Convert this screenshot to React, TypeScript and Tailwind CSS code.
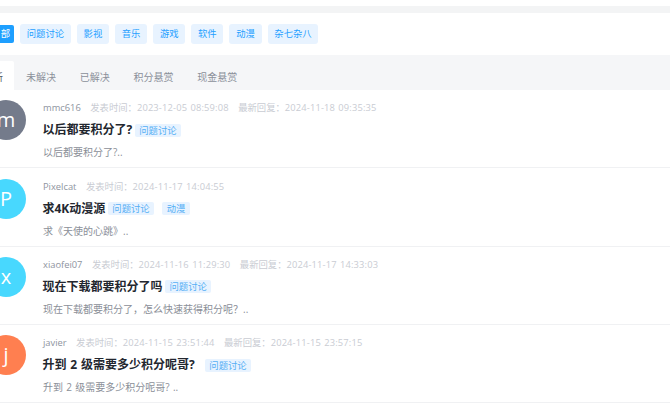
const categories = ['问题讨论', '影视', '音乐', '游戏', '软件', '动漫', '杂七杂八'];
const tabs = ['未解决', '已解决', '积分悬赏', '现金悬赏'];

type Post = {
  user: string;
  letter: string;
  avatar: string;
  created: string;
  replied?: string;
  title: string;
  tags: string[];
  excerpt: string;
};

const posts: Post[] = [
  {
    user: 'mmc616',
    letter: 'm',
    avatar: 'bg-[#747b8b]',
    created: '2023-12-05 08:59:08',
    replied: '2024-11-18 09:35:35',
    title: '以后都要积分了?',
    tags: ['问题讨论'],
    excerpt: '以后都要积分了?..',
  },
  {
    user: 'Pixelcat',
    letter: 'P',
    avatar: 'bg-[#48d8fe]',
    created: '2024-11-17 14:04:55',
    title: '求4K动漫源',
    tags: ['问题讨论', '动漫'],
    excerpt: '求《天使的心跳》..',
  },
  {
    user: 'xiaofei07',
    letter: 'x',
    avatar: 'bg-[#48d8fe]',
    created: '2024-11-16 11:29:30',
    replied: '2024-11-17 14:33:03',
    title: '现在下载都要积分了吗',
    tags: ['问题讨论'],
    excerpt: '现在下载都要积分了，怎么快速获得积分呢？..',
  },
  {
    user: 'javier',
    letter: 'j',
    avatar: 'bg-[#ff7f50]',
    created: '2024-11-15 23:51:44',
    replied: '2024-11-15 23:57:15',
    title: '升到 2 级需要多少积分呢哥?\u00a0\u00a0',
    tags: ['问题讨论'],
    excerpt: '升到 2 级需要多少积分呢哥? ..',
  },
];

function Stamp({ label, value }: { label: string; value: string }) {
  return (
    <span className="text-[#c9ccd3]">
      {label}：<span className="tracking-[0.16px]">{value}</span>
    </span>
  );
}

function PostRow({ post }: { post: Post }) {
  return (
    <div className="flex h-[78.33px] border-b border-[#f0f1f3] pt-[10.33px] [word-spacing:0.7px]">
      <div
        className={`flex h-10 w-10 shrink-0 items-center justify-center rounded-full text-[20px] text-white ${post.avatar}`}
      >
        {post.letter}
      </div>
      <div className="ml-[17px] min-w-0 pt-[1px]">
        <div className="flex h-[13px] items-center gap-[9.5px] text-[9.33px] leading-[13px] whitespace-nowrap">
          <span className="text-[#8e94a0]">{post.user}</span>
          <Stamp label="发表时间" value={post.created} />
          {post.replied && <Stamp label="最新回复" value={post.replied} />}
        </div>
        <div className="mt-[9px] flex h-[14px] items-center whitespace-nowrap">
          <span className="mr-[1.5px] -ml-[0.5px] text-[12px] font-bold text-[#23272f]">{post.title}</span>
          {post.tags.map((tag) => (
            <span
              key={tag}
              className="mr-[7px] ml-[1px] rounded-[2px] bg-[#e8f3ff] px-[4.5px] text-[9.33px] leading-[13px] text-[#55aff5]"
            >
              {tag}
            </span>
          ))}
        </div>
        <div className="mt-[8px] text-[10px] leading-[14px] whitespace-nowrap text-[#8b8f98]">{post.excerpt}</div>
      </div>
    </div>
  );
}

export default function App() {
  return (
    <div className="h-[408px] w-[670px] overflow-hidden bg-white font-['Open_Sans','Noto_Sans_CJK_SC',sans-serif]">
      <div className="mt-[6px] h-[7px] bg-[#f3f4f5]" />

      <div className="flex h-[42px] items-center gap-[6px]">
        <span className="flex h-[18px] w-[14px] items-center justify-end rounded-r-[2px] bg-[#1e9fff] pr-[4px] text-[9.33px] text-white">
          部
        </span>
        {categories.map((name) => (
          <span
            key={name}
            className="flex h-5 items-center rounded-[3px] bg-[#e8f3ff] px-[6.75px] text-[9.33px] text-[#1e9fff]"
          >
            {name}
          </span>
        ))}
      </div>

      <div className="flex h-[35px] items-end bg-[#f5f6f8]">
        <div className="flex h-[29px] w-[14px] items-center justify-end rounded-tr-[2px] bg-white pt-[3px] pr-[11px] text-[10px] text-[#555a64]">
          新
        </div>
        {tabs.map((tab) => (
          <div key={tab} className="flex h-[29px] items-center px-[11.9px] pt-[3px] text-[10px] text-[#8b909a]">
            {tab}
          </div>
        ))}
      </div>

      <div className="-ml-[14px]">
        {posts.map((post) => (
          <PostRow key={post.user} post={post} />
        ))}
      </div>
    </div>
  );
}
